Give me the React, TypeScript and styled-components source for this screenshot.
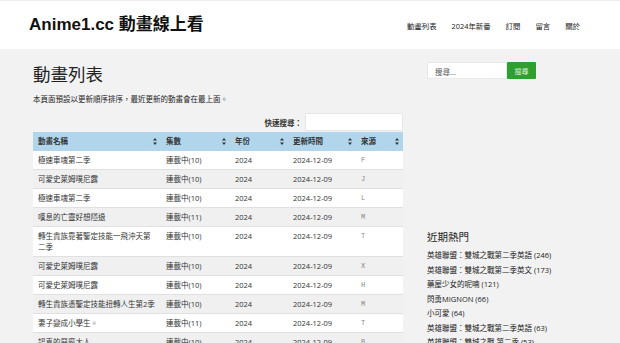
import React from 'react';
import styled, { createGlobalStyle } from 'styled-components';

const GlobalStyle = createGlobalStyle`
  html, body {
    margin: 0;
    padding: 0;
    background: #f2f2f2;
    font-family: 'Open Sans', 'Noto Sans CJK TC', sans-serif;
    color: #333;
    overflow: hidden;
  }
`;

const Header = styled.header`
  height: 48px;
  background: #fff;
  border-top: 1px solid #ececec;
  display: flex;
  align-items: center;
  justify-content: space-between;
  padding: 0 40px 0 29px;
`;

const SiteTitle = styled.div`
  font-family: 'Liberation Sans', 'Noto Sans CJK TC', sans-serif;
  font-weight: 700;
  font-size: 17px;
  color: #111;
  margin-top: -6px;
`;

const Nav = styled.nav`
  display: flex;
  gap: 15px;
  font-size: 7.4px;
  color: #222;
`;

const Page = styled.div`
  display: flex;
  gap: 24px;
  padding: 14px 23px 0 33px;
`;

const Main = styled.main`
  width: 370px;
  flex: none;
`;

const PageTitle = styled.h1`
  margin: 0;
  font-size: 17.5px;
  font-weight: 400;
  line-height: 22px;
  color: #222;
`;

const Intro = styled.p`
  margin: 8px 0 0;
  font-size: 7.5px;
  line-height: 12px;
  color: #222;
`;

const QuickSearch = styled.div`
  display: flex;
  justify-content: flex-end;
  align-items: center;
  gap: 3px;
  margin-top: 8px;
  font-size: 7.5px;
  font-weight: 700;
`;

const QuickInput = styled.div`
  width: 98px;
  height: 18px;
  background: #fff;
  border: 1px solid #e6e6e6;
  box-sizing: border-box;
`;

const Table = styled.table`
  width: 370px;
  margin-top: 1px;
  border-collapse: collapse;
  table-layout: fixed;
  font-size: 7.5px;
`;

const HeadCell = styled.th<{ $w: number }>`
  width: ${(p) => p.$w - 10}px;
  background: #b1d6ec;
  text-align: left;
  font-weight: 700;
  padding: 4px 5px;
  line-height: 11px;
  position: relative;
`;

const SortMark = styled.svg`
  position: absolute;
  right: 4px;
  top: 6px;
`;

const Row = styled.tr<{ $odd: boolean }>`
  background: ${(p) => (p.$odd ? '#fff' : '#f0f0f0')};
  border-bottom: 1px solid #e0e0e0;
`;

const Cell = styled.td`
  padding: 4px 5px 3px;
  line-height: 11px;
  vertical-align: top;
`;

const SourceCell = styled(Cell)`
  font-family: 'Liberation Mono', monospace;
  font-size: 7px;
  color: #888;
`;

const Side = styled.aside`
  flex: 1;
`;

const SearchRow = styled.div`
  display: flex;
  margin-top: -1px;
`;

const SearchInput = styled.div`
  width: 80px;
  height: 17px;
  background: #fff;
  border: 1px solid #e8e8e8;
  box-sizing: border-box;
  font-size: 7.5px;
  color: #555;
  padding: 3px 7px;
`;

const SearchButton = styled.div`
  width: 29px;
  height: 17px;
  background: #2f9f2f;
  color: #d8f0d8;
  font-size: 7px;
  display: flex;
  align-items: center;
  justify-content: center;
  border-radius: 1px;
`;

const WidgetTitle = styled.h2`
  margin: 151px 0 0;
  font-size: 10.5px;
  font-weight: 400;
  color: #222;
  line-height: 14px;
`;

const HotList = styled.ul`
  list-style: none;
  margin: 4px 0 0;
  padding: 0;
  font-size: 7.5px;
  line-height: 14.5px;
  color: #222;
`;

const cols = [
  { t: '動畫名稱', w: 128 },
  { t: '集數', w: 69 },
  { t: '年份', w: 58 },
  { t: '更新時間', w: 68 },
  { t: '來源', w: 47 },
];

const rows = [
  ['極速車魂第二季', '連載中(10)', 'F'],
  ['可愛史萊姆噗尼露', '連載中(10)', 'J'],
  ['極速車魂第二季', '連載中(10)', 'L'],
  ['嘆息的亡靈好想隱退', '連載中(11)', 'M'],
  ['轉生貴族靠著鑒定技能一飛沖天第二季', '連載中(10)', 'T'],
  ['可愛史萊姆噗尼露', '連載中(10)', 'X'],
  ['可愛史萊姆噗尼露', '連載中(10)', 'H'],
  ['轉生貴族憑鑒定技能扭轉人生第2季', '連載中(10)', 'M'],
  ['妻子變成小學生。', '連載中(11)', 'T'],
  ['認真的惡魔大人', '連載中(10)', 'B'],
];

const hot = [
  '英雄聯盟：雙城之戰第二季英語 (246)',
  '英雄聯盟：雙城之戰第二季英文 (173)',
  '藥屋少女的呢喃 (121)',
  '閃勇MIGNON (66)',
  '小可愛 (64)',
  '英雄聯盟：雙城之戰第二季英語 (63)',
  '英雄聯盟：雙城之戰 第二季 (53)',
];

const Sort = () => (
  <SortMark width="4" height="7" viewBox="0 0 4 7">
    <path d="M2 0 L4 2.6 L0 2.6 Z M2 7 L4 4.4 L0 4.4 Z" fill="#333" />
  </SortMark>
);

export default function App() {
  return (
    <>
      <GlobalStyle />
      <Header>
        <SiteTitle>Anime1.cc 動畫線上看</SiteTitle>
        <Nav>
          <span>動畫列表</span>
          <span>2024年新番</span>
          <span>訂閱</span>
          <span>留言</span>
          <span>關於</span>
        </Nav>
      </Header>
      <Page>
        <Main>
          <PageTitle>動畫列表</PageTitle>
          <Intro>本頁面預設以更新順序排序，最近更新的動畫會在最上面。</Intro>
          <QuickSearch>
            快速搜尋：
            <QuickInput />
          </QuickSearch>
          <Table>
            <thead>
              <tr>
                {cols.map((c) => (
                  <HeadCell key={c.t} $w={c.w}>
                    {c.t}
                    <Sort />
                  </HeadCell>
                ))}
              </tr>
            </thead>
            <tbody>
              {rows.map((r, i) => (
                <Row key={i} $odd={i % 2 === 0}>
                  <Cell>{r[0]}</Cell>
                  <Cell>{r[1]}</Cell>
                  <Cell>2024</Cell>
                  <Cell>2024-12-09</Cell>
                  <SourceCell>{r[2]}</SourceCell>
                </Row>
              ))}
            </tbody>
          </Table>
        </Main>
        <Side>
          <SearchRow>
            <SearchInput>搜尋...</SearchInput>
            <SearchButton>搜尋</SearchButton>
          </SearchRow>
          <WidgetTitle>近期熱門</WidgetTitle>
          <HotList>
            {hot.map((h, i) => (
              <li key={i}>{h}</li>
            ))}
          </HotList>
        </Side>
      </Page>
    </>
  );
}
